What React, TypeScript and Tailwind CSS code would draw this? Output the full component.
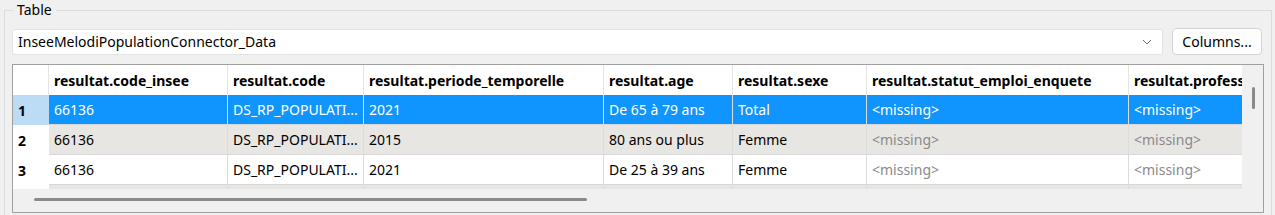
import React from 'react';

const columns = [
  { name: 'resultat.code_insee', w: 'w-[179px]' },
  { name: 'resultat.code', w: 'w-[136px]' },
  { name: 'resultat.periode_temporelle', w: 'w-[240px]' },
  { name: 'resultat.age', w: 'w-[129px]' },
  { name: 'resultat.sexe', w: 'w-[134px]' },
  { name: 'resultat.statut_emploi_enquete', w: 'w-[262px]' },
  { name: 'resultat.profession', w: 'w-[200px]' },
];

const MISSING = null;

const rows: (string | null)[][] = [
  ['66136', 'DS_RP_POPULATI...', '2021', 'De 65 à 79 ans', 'Total', MISSING, MISSING],
  ['66136', 'DS_RP_POPULATI...', '2015', '80 ans ou plus', 'Femme', MISSING, MISSING],
  ['66136', 'DS_RP_POPULATI...', '2021', 'De 25 à 39 ans', 'Femme', MISSING, MISSING],
];

export default function App() {
  return (
    <div
      className="w-[1275px] h-[215px] overflow-hidden bg-[#f0f0f0] text-[14px] text-black"
      style={{ fontFamily: '"Noto Sans", "Open Sans", sans-serif' }}
    >
      <fieldset className="ml-[4px] mt-[2px] w-[1268px] h-[240px] border border-[#dcdcdc] pl-[7px] pr-[7px]">
        <legend className="ml-[1px] px-[4px] leading-[16px]">Table</legend>

        {/* combo + button */}
        <div className="mt-[10px] flex items-center gap-[9px]">
          <div className="w-[1151px] h-[26px] bg-white border border-[#e3e3e3] rounded-[3px] flex items-center justify-between pl-[5px] pr-[8px]">
            <span>InseeMelodiPopulationConnector_Data</span>
            <svg width="10" height="6" viewBox="0 0 10 6" className="mr-[2px]">
              <path d="M1 1 L5 5 L9 1" fill="none" stroke="#707070" strokeWidth="1" />
            </svg>
          </div>
          <button className="w-[90px] h-[27px] bg-[#fdfdfd] border border-[#d4d4d4] rounded-[4px] flex items-center justify-center">
            Columns...
          </button>
        </div>

        {/* table */}
        <div className="mt-[9px] w-[1252px] h-[149px] border border-[#a0a0a0] flex flex-col bg-[#f0f0f0]">
          <div className="flex h-[124px]">
            <div className="w-[1229px] overflow-hidden bg-white">
              {/* header */}
              <div className="flex h-[30px] bg-white">
                <div className="w-[36px] shrink-0 border-r border-[#e3e3e3]" />
                {columns.map((c) => (
                  <div
                    key={c.name}
                    className={`${c.w} shrink-0 border-r border-[#e3e3e3] pl-[5px] flex items-center font-bold whitespace-nowrap overflow-hidden`}
                  >
                    {c.name}
                  </div>
                ))}
              </div>
              {rows.map((r, i) => {
                const sel = i === 0;
                const alt = i % 2 === 1;
                const bg = sel ? 'bg-[#0f95fd] text-white' : alt ? 'bg-[#e8e6e3]' : 'bg-white';
                return (
                  <div key={i} className="flex h-[30px]">
                    <div
                      className={`w-[36px] shrink-0 pl-[5px] flex items-center font-bold ${
                        sel ? 'bg-[#bcdcf5]' : 'bg-white'
                      }`}
                    >
                      {i + 1}
                    </div>
                    <div className={`flex border-b border-[#d8d8d8] ${bg}`}>
                      {r.map((v, j) => (
                        <div
                          key={j}
                          className={`${columns[j].w} shrink-0 border-r border-[#dcdcdc] pl-[5px] flex items-center whitespace-nowrap overflow-hidden`}
                        >
                          {v === null ? (
                            <span className={sel ? 'text-white' : 'text-[#8a8a8a]'}>&lt;missing&gt;</span>
                          ) : (
                            v
                          )}
                        </div>
                      ))}
                    </div>
                  </div>
                );
              })}
              {/* partially visible next row */}
              <div className="flex h-[30px]">
                <div className="w-[36px] shrink-0 bg-white" />
                <div className="flex bg-[#e8e6e3]">
                  {columns.map((c) => (
                    <div key={c.name} className={`${c.w} shrink-0 border-r border-[#dcdcdc]`} />
                  ))}
                </div>
              </div>
            </div>
            {/* vertical scrollbar */}
            <div className="flex-1 pt-[22px] flex justify-center">
              <div className="w-[3px] h-[22px] rounded-full bg-[#8a8a8a] ml-[1px]" />
            </div>
          </div>
          {/* horizontal scrollbar */}
          <div className="flex-1 pl-[21px] pt-[9px]">
            <div className="w-[553px] h-[3px] rounded-full bg-[#8a8a8a]" />
          </div>
        </div>
      </fieldset>
    </div>
  );
}
